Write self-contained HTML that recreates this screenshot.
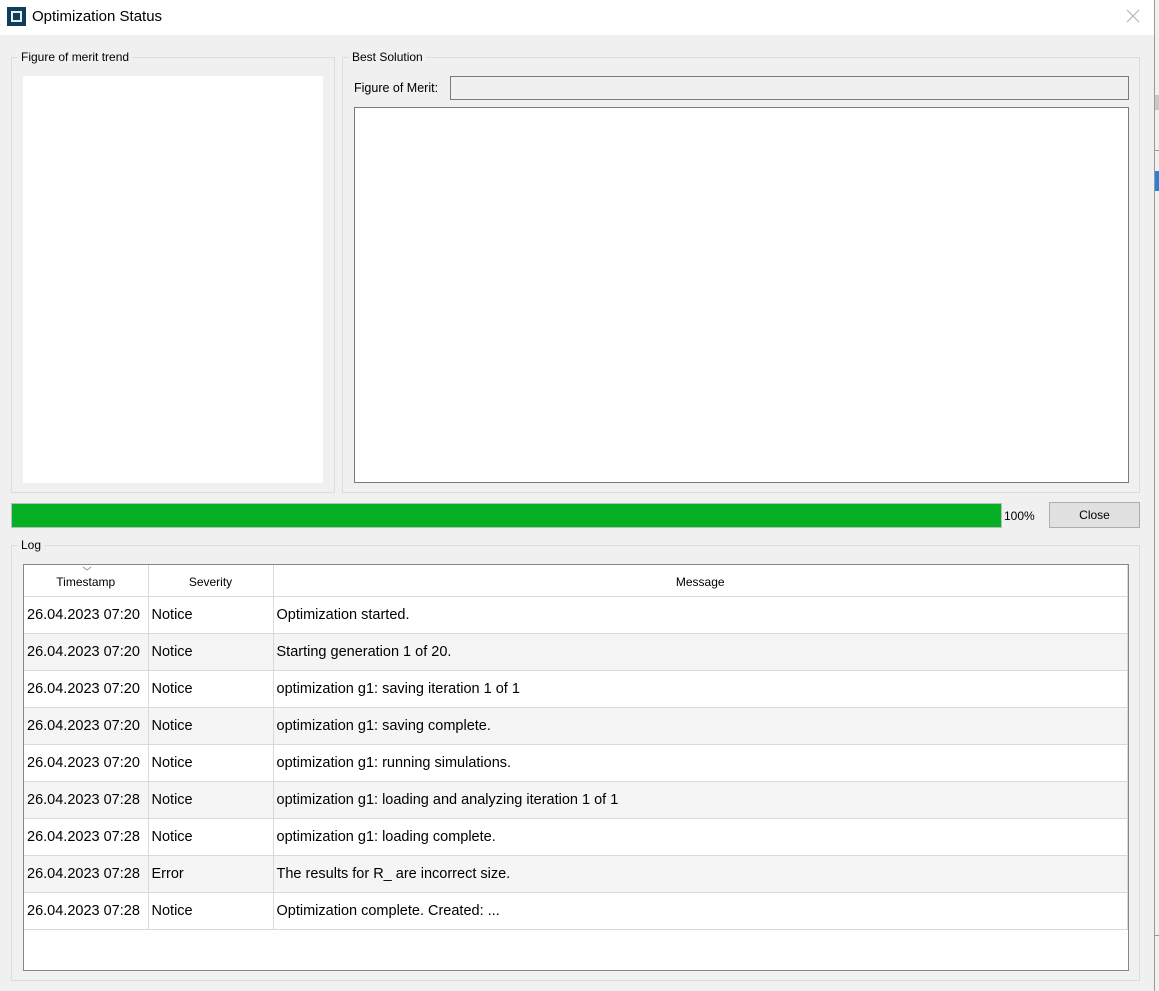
<!DOCTYPE html>
<html><head><meta charset="utf-8"><style>
*{box-sizing:border-box;margin:0;padding:0}
body{width:1159px;height:991px;background:#f0f0f0;font-family:"Liberation Sans",sans-serif;color:#000;position:relative;overflow:hidden}
.a{position:absolute}
.title{left:0;top:0;width:1154px;height:35px;background:#fff}
.grp{border:1px solid #dcdcdc}
.lbl{background:#f0f0f0;font-size:12px;padding:0 3px;line-height:14px}
table{border-collapse:collapse;font-size:14.5px}
td{height:37px;border-right:1px solid #d9d9d9;border-bottom:1px solid #d9d9d9;padding-left:3px;white-space:nowrap}
th{height:31px;font-weight:normal;font-size:12px;border-right:1px solid #d9d9d9;border-bottom:1px solid #d9d9d9;padding-top:4px}
tr.alt td{background:#f5f5f5}
</style></head><body>
<div class="a title"></div>
<div class="a" style="left:7px;top:7px;width:19px;height:19px;background:#0d3f5a"></div>
<div class="a" style="left:11px;top:11px;width:11px;height:11px;border:2px solid #e8eef2"></div>
<div class="a" style="left:32px;top:7px;font-size:15px;line-height:20px">Optimization Status</div>
<svg class="a" style="left:1126px;top:9px" width="14" height="14"><path d="M1 1L13 13M13 1L1 13" stroke="#b0b0b0" stroke-width="1"/></svg>
<div class="a" style="left:1154px;top:35px;width:1px;height:956px;background:#9a9a9a"></div>
<div class="a" style="left:1154px;top:0;width:1px;height:35px;background:#9a9a9a"></div>
<div class="a" style="left:1155px;top:95px;width:4px;height:15px;background:#c8c8c8"></div>
<div class="a" style="left:1155px;top:150px;width:4px;height:1px;background:#999"></div>
<div class="a" style="left:1155px;top:171px;width:4px;height:20px;background:#2b7fd6"></div>
<div class="a" style="left:1155px;top:935px;width:4px;height:1px;background:#999"></div>

<div class="a grp" style="left:11px;top:57px;width:324px;height:436px"></div>
<div class="a lbl" style="left:18px;top:50px">Figure of merit trend</div>
<div class="a" style="left:23px;top:76px;width:300px;height:407px;background:#fff"></div>

<div class="a grp" style="left:342px;top:57px;width:798px;height:436px"></div>
<div class="a lbl" style="left:349px;top:50px">Best Solution</div>
<div class="a" style="left:354px;top:81px;font-size:12.5px">Figure of Merit:</div>
<div class="a" style="left:450px;top:76px;width:679px;height:24px;border:1px solid #7a7a7a;background:#f0f0f0"></div>
<div class="a" style="left:354px;top:107px;width:775px;height:376px;border:1px solid #7a7a7a;background:#fff"></div>

<div class="a" style="left:11px;top:503px;width:991px;height:25px;border:1px solid #bcbcbc;background:#06b025"></div>
<div class="a" style="left:1004px;top:509px;font-size:12px">100%</div>
<div class="a" style="left:1049px;top:502px;width:91px;height:26px;border:1px solid #adadad;background:#e1e1e1;font-size:12px;text-align:center;line-height:24px">Close</div>

<div class="a grp" style="left:11px;top:545px;width:1129px;height:436px"></div>
<div class="a lbl" style="left:18px;top:538px">Log</div>
<div class="a" style="left:23px;top:564px;width:1106px;height:407px;border:1px solid #828790;background:#fff;overflow:hidden">
<svg class="a" style="left:58px;top:1px" width="10" height="6"><path d="M1 1L5 4L9 1" stroke="#999" fill="none"/></svg>
<table style="width:1104px">
<tr><th style="width:124px;height:30px">Timestamp</th><th style="width:125px">Severity</th><th>Message</th></tr>
<tr><td>26.04.2023 07:20</td><td>Notice</td><td>Optimization started.</td></tr>
<tr class="alt"><td>26.04.2023 07:20</td><td>Notice</td><td>Starting generation 1 of 20.</td></tr>
<tr><td>26.04.2023 07:20</td><td>Notice</td><td>optimization g1: saving iteration 1 of 1</td></tr>
<tr class="alt"><td>26.04.2023 07:20</td><td>Notice</td><td>optimization g1: saving complete.</td></tr>
<tr><td>26.04.2023 07:20</td><td>Notice</td><td>optimization g1: running simulations.</td></tr>
<tr class="alt"><td>26.04.2023 07:28</td><td>Notice</td><td>optimization g1: loading and analyzing iteration 1 of 1</td></tr>
<tr><td>26.04.2023 07:28</td><td>Notice</td><td>optimization g1: loading complete.</td></tr>
<tr class="alt"><td>26.04.2023 07:28</td><td>Error</td><td>The results for R_ are incorrect size.</td></tr>
<tr><td>26.04.2023 07:28</td><td>Notice</td><td>Optimization complete. Created: ...</td></tr>
</table>
</div>
</body></html>
